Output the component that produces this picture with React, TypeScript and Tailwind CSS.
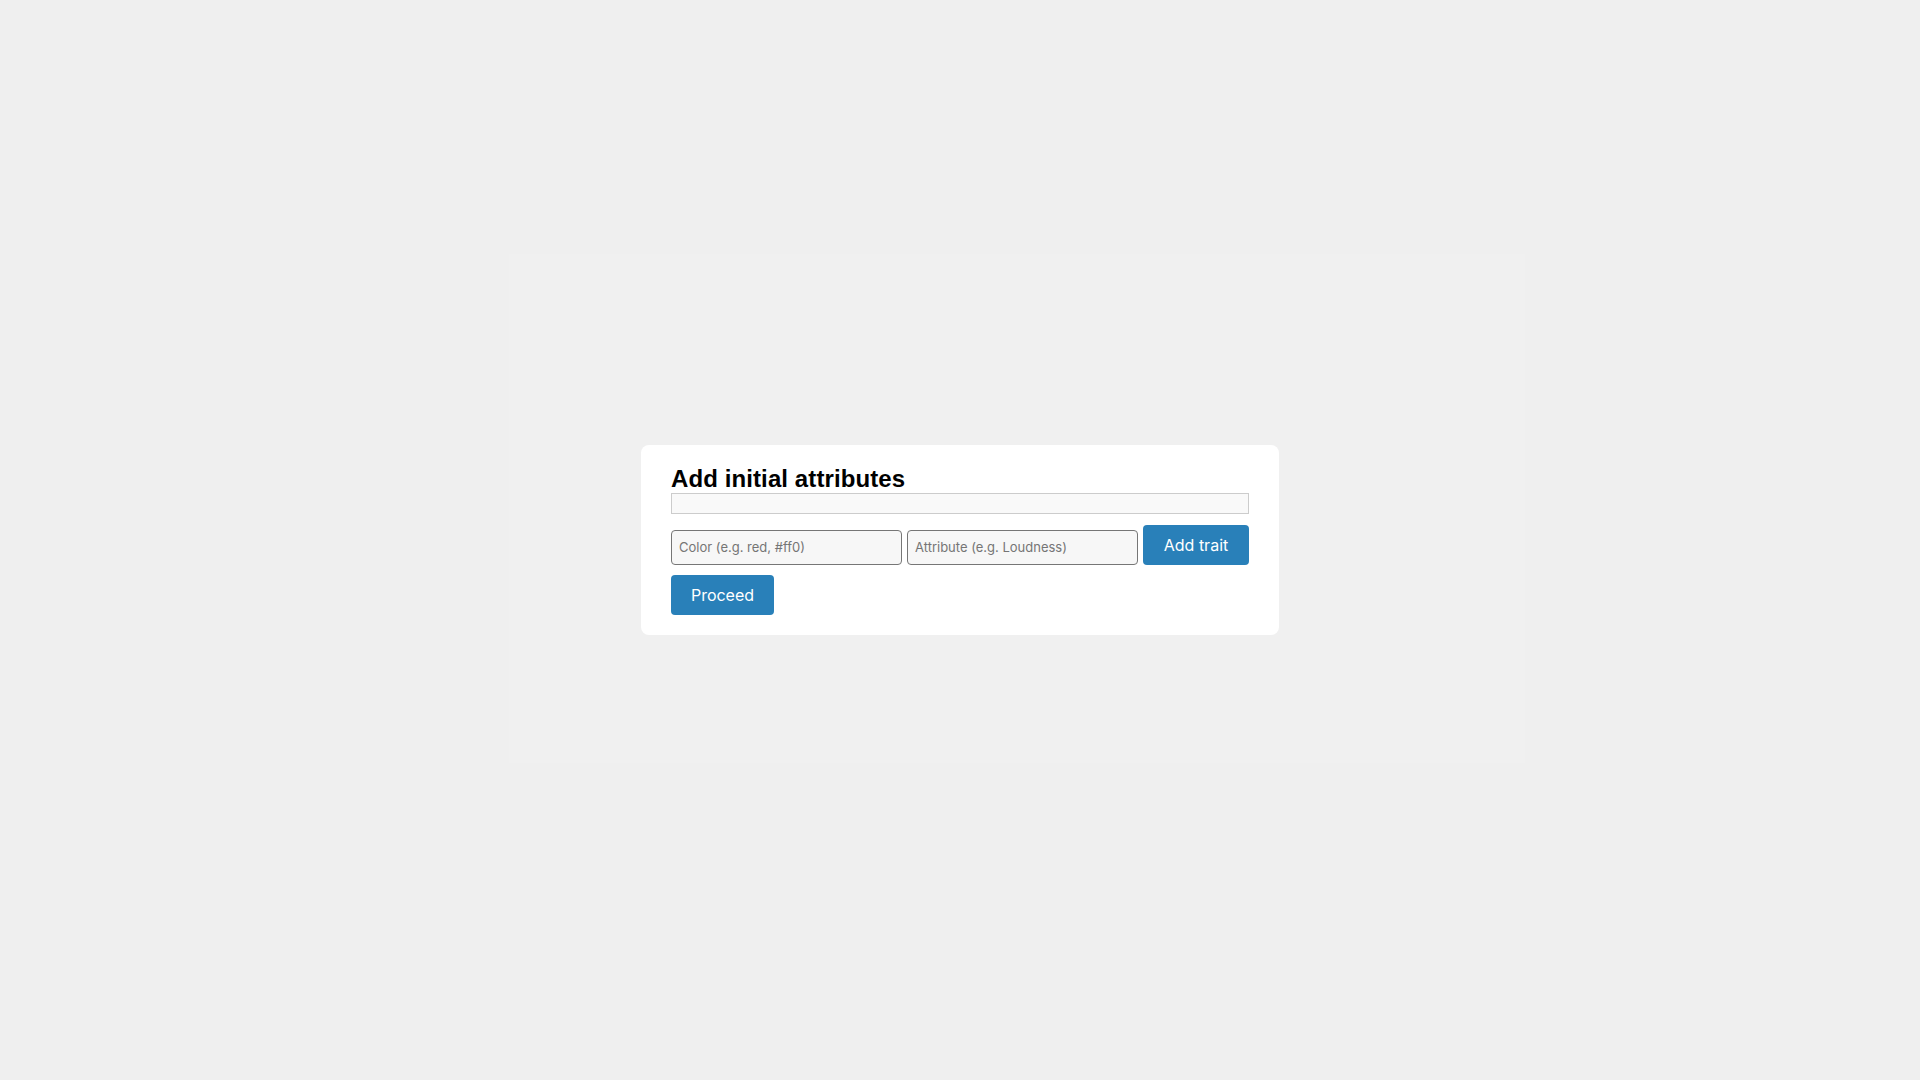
import React, { useState } from 'react';

const inter = { fontFamily: 'Inter, "Noto Sans", sans-serif' };

export default function App() {
  const [color, setColor] = useState('');
  const [attr, setAttr] = useState('');

  return (
    <div className="relative min-h-screen w-full bg-[#efefef] flex items-center justify-center">
      {/* faint backdrop */}
      <div className="absolute left-[509px] top-[254px] w-[1016px] h-[509px] bg-[#f0f0f0]"></div>

      <div className="relative w-[638px] bg-white rounded-[8px] px-[30px] pt-[20px] pb-[20px]">
        <h2 className="text-[24px] font-bold leading-[28px] tracking-[0.1px] text-black font-['Liberation_Sans',Arial,sans-serif]">
          Add initial attributes
        </h2>
        <div className="h-[21px] w-full border border-[#cccccc] bg-[#f9f9f9]"></div>

        <div className="mt-[11px] flex items-end gap-[5px]" style={inter}>
          <input
            value={color}
            onChange={(e) => setColor(e.target.value)}
            placeholder="Color (e.g. red, #ff0)"
            className="flex-1 min-w-0 h-[35px] px-[7px] pb-[1px] text-[13px] bg-[#f7f7f7] border border-[#767676] rounded-[4px] placeholder:text-[#757575] outline-none"
          />
          <input
            value={attr}
            onChange={(e) => setAttr(e.target.value)}
            placeholder="Attribute (e.g. Loudness)"
            className="flex-1 min-w-0 h-[35px] px-[7px] pb-[1px] text-[13px] bg-[#f7f7f7] border border-[#767676] rounded-[4px] placeholder:text-[#757575] outline-none"
          />
          <button className="w-[106px] h-[40px] rounded-[4px] bg-[#2980b9] text-white text-[16px] cursor-pointer">
            Add trait
          </button>
        </div>

        <div className="mt-[10px]" style={inter}>
          <button className="w-[103px] h-[40px] rounded-[4px] bg-[#2980b9] text-white text-[16px] cursor-pointer">
            Proceed
          </button>
        </div>
      </div>
    </div>
  );
}
